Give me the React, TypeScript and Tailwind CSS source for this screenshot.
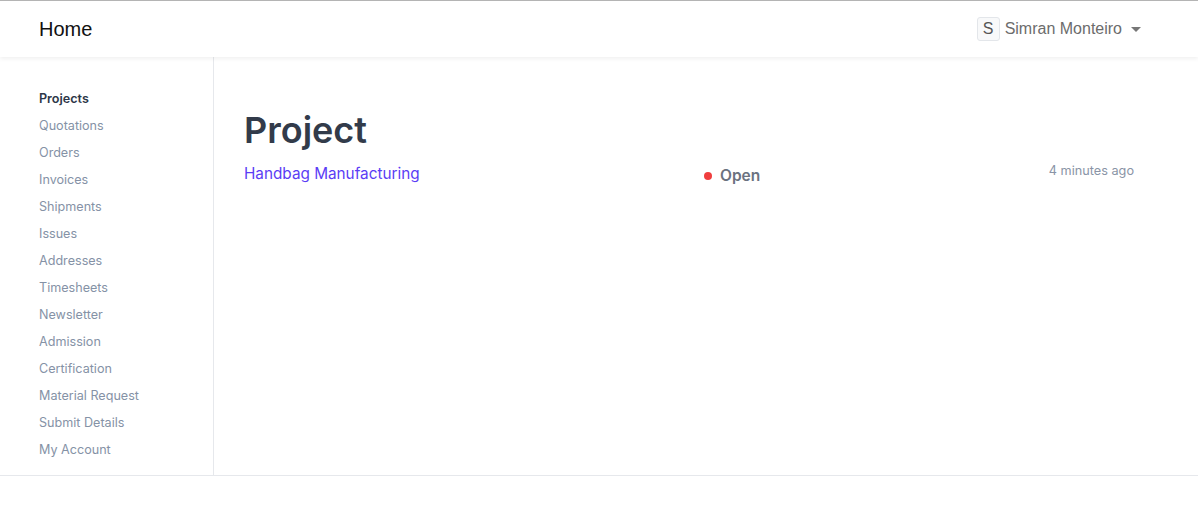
import React from 'react'

const sidebarItems = [
  'Projects',
  'Quotations',
  'Orders',
  'Invoices',
  'Shipments',
  'Issues',
  'Addresses',
  'Timesheets',
  'Newsletter',
  'Admission',
  'Certification',
  'Material Request',
  'Submit Details',
  'My Account',
]

function Navbar() {
  return (
    <header className="h-[57px] border-t border-[#b4b4b4] bg-white shadow-[0_2px_4px_rgba(0,0,0,0.06)] relative z-10">
      <div className="flex h-full items-center justify-between pl-[39px] pr-[57px] font-['Liberation_Sans',Arial,sans-serif]">
        <span className="text-[20px] text-[#111]">Home</span>
        <div className="flex items-center">
          <div className="flex h-[24px] w-[23px] items-center justify-center rounded-[3px] border border-[#e3e6ea] bg-[#f8f9fa] text-[16px] text-[#555]">
            S
          </div>
          <span className="ml-[5px] text-[16px] text-[#6c6c6c]">Simran Monteiro</span>
          <span className="ml-[9px] mt-[1px] h-0 w-0 border-x-[5px] border-t-[5px] border-x-transparent border-t-[#777]" />
        </div>
      </div>
    </header>
  )
}

function Sidebar() {
  return (
    <aside className="w-[214px] shrink-0 border-r border-[#e6e8ec] pl-[39px] pt-[28px] pb-[12px]">
      <ul className="flex flex-col">
        {sidebarItems.map((item, i) => (
          <li
            key={item}
            className={
              i === 0
                ? 'h-[27px] leading-[27px] text-[12.6px] font-semibold text-[#2d3748]'
                : 'h-[27px] leading-[27px] text-[12.6px] text-[#8592a6]'
            }
          >
            {item}
          </li>
        ))}
      </ul>
    </aside>
  )
}

export default function App() {
  return (
    <div className="min-h-screen bg-white font-['Inter','Noto_Sans',sans-serif]">
      <Navbar />
      <div className="flex border-b border-[#e6e8ec]">
        <Sidebar />
        <main className="flex-1 pl-[30px] pr-[64px] pt-[49px]">
          <h1 className="text-[36px] font-semibold leading-[48px] text-[#323b4a]">Project</h1>
          <div className="flex items-start">
            <a className="w-[460px] pt-[8px] text-[15.3px] leading-[24px] text-[#5b3df5]">Handbag Manufacturing</a>
            <div className="flex items-center pt-[10px]">
              <span className="h-[8px] w-[8px] rounded-full bg-[#f03e3e]" />
              <span className="ml-[8px] text-[15.5px] font-semibold leading-[24px] text-[#6b7280]">Open</span>
            </div>
            <span className="ml-auto pt-[7px] text-[12.7px] leading-[20px] text-[#8a94a6]">4 minutes ago</span>
          </div>
        </main>
      </div>
    </div>
  )
}
